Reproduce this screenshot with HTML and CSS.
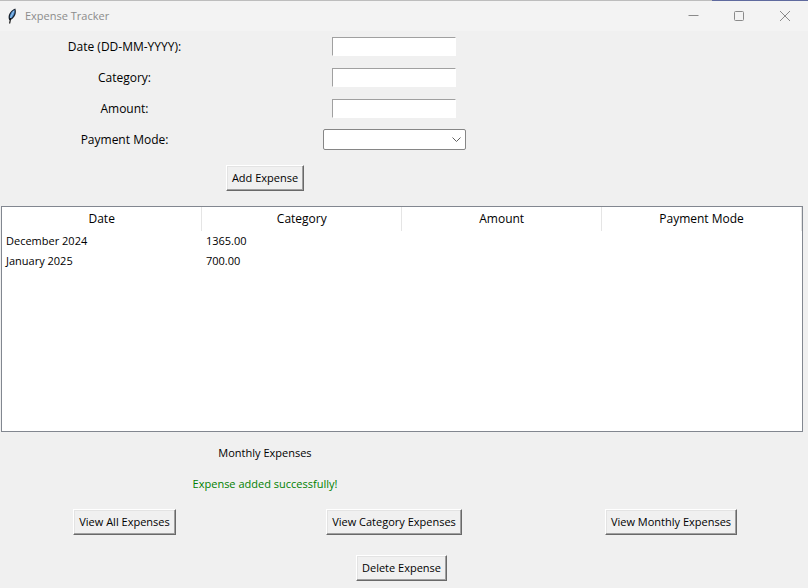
FILE: index.html
```html
<!DOCTYPE html>
<html lang="en">
<head>
<meta charset="utf-8">
<title>Expense Tracker</title>
<link rel="stylesheet" href="styles.css">
</head>
<body>
<div class="window">
  <header class="titlebar">
    <svg class="feather" width="10" height="16" viewBox="0 0 10 16" aria-hidden="true">
      <path d="M2.200 12.200C.4 8 2.600 3.200 8.300.6c1.600 4-.2 9-4.300 11.200z" fill="#17202c"/>
      <path d="M2.900 9.800C2.600 6.500 4.600 3.200 7.600 1.700c.5 2.700-.7 6.200-3.300 8.600z" fill="#4f91d4"/>
      <path d="M6.800 3L3.400 10" stroke="#b9d8f2" stroke-width=".7" fill="none"/>
      <path d="M3.600 10.500L2.600 15.500" stroke="#111" stroke-width="1.200" fill="none"/>
    </svg>
    <h1 class="title">Expense Tracker</h1>
    <div class="controls">
      <button class="control" type="button" aria-label="Minimize"><svg width="11" height="11" viewBox="0 0 11 11"><path d="M.5 4.500h10"/></svg></button>
      <button class="control" type="button" aria-label="Maximize"><svg width="11" height="11" viewBox="0 0 11 11"><rect x=".5" y=".5" width="9" height="9" rx="1"/></svg></button>
      <button class="control" type="button" aria-label="Close"><svg width="11" height="11" viewBox="0 0 11 11"><path d="M0 0l10 10M10 0L0 10"/></svg></button>
    </div>
  </header>
  <main class="content">
    <form class="form">
      <div class="row"><label for="date">Date (DD-MM-YYYY):</label><input class="entry" id="date" type="text"></div>
      <div class="row"><label for="category">Category:</label><input class="entry" id="category" type="text"></div>
      <div class="row"><label for="amount">Amount:</label><input class="entry" id="amount" type="text"></div>
      <div class="row"><label for="mode">Payment Mode:</label>
        <div class="combo">
          <select id="mode"><option></option></select>
          <svg class="chevron" width="9" height="5" viewBox="0 0 9 5" aria-hidden="true"><path d="M.5.5l4 4 4-4"/></svg>
        </div>
      </div>
      <div class="pair actions"><button class="button" type="button">Add Expense</button></div>
    </form>
    <div class="tree">
      <table>
        <thead><tr><th>Date</th><th>Category</th><th>Amount</th><th>Payment Mode</th></tr></thead>
        <tbody>
          <tr><td>December 2024</td><td>1365.00</td><td></td><td></td></tr>
          <tr><td>January 2025</td><td>700.00</td><td></td><td></td></tr>
        </tbody>
      </table>
    </div>
    <p class="pair message">Monthly Expenses</p>
    <p class="pair message success">Expense added successfully!</p>
    <div class="row actions">
      <button class="button" type="button">View All Expenses</button>
      <button class="button" type="button">View Category Expenses</button>
      <button class="button" type="button">View Monthly Expenses</button>
    </div>
    <div class="footer"><button class="button" type="button">Delete Expense</button></div>
  </main>
</div>
</body>
</html>
```
FILE: styles.css
```css
* { box-sizing: border-box; }

body {
  margin: 0;
  background: #f0f0f0;
  color: #000;
  font: 11px/16px "Open Sans", "Noto Sans", sans-serif;
}

.window {
  min-height: 100vh;
  border-top: 1px solid #bdbdbd;
  border-image: linear-gradient(to right, #bdbdbd 88%, #5f6a9e 88%) 1;
}

.titlebar {
  display: flex;
  align-items: center;
  height: 30px;
  padding-left: 7px;
  background: #f3f3f3;
}

.title {
  flex: 1;
  margin: 0 0 0 8px;
  color: #8c8c8c;
  font-size: 11px;
  font-weight: 400;
}

.controls { display: flex; }

.control {
  display: flex;
  align-items: center;
  justify-content: center;
  width: 46px;
  height: 30px;
  padding: 0;
  border: 0;
  background: none;
}

.control svg, .chevron { fill: none; stroke: #8a8a8a; }

.content { padding-right: 5px; }

.row {
  display: grid;
  grid-template-columns: 249fr 290fr 264fr;
  align-items: center;
  justify-items: center;
  min-height: 31px;
}

label, th { font-size: 12px; }

.pair {
  display: grid;
  place-items: center;
  width: 66%;
}

.entry {
  width: 124px;
  height: 19px;
  padding: 1px;
  border: 1px solid #fff;
  border-top-color: #a0a0a0;
  border-left-color: #a0a0a0;
  border-radius: 0;
  background: #fff;
  font: inherit;
}

.combo { position: relative; width: 143px; height: 21px; }

.combo select {
  appearance: none;
  display: block;
  width: 100%;
  height: 100%;
  padding: 0 20px 0 4px;
  border: 1px solid #868686;
  border-radius: 2px;
  background: #fff;
  font: inherit;
}

.chevron {
  position: absolute;
  top: 8px;
  right: 5px;
  stroke: #606060;
  pointer-events: none;
}

.actions { min-height: 46px; }

.button {
  height: 26px;
  padding: 0 5px;
  border: 1px solid;
  border-color: #fff #696969 #696969 #fff;
  box-shadow: inset -1px -1px #a0a0a0, inset 1px 1px #e3e3e3;
  background: #f0f0f0;
  color: #000;
  font: inherit;
}

.tree {
  min-height: 226px;
  margin: 5px 0 5px 1px;
  border: 1px solid #828790;
  background: #fff;
}

table {
  width: 100%;
  border-collapse: collapse;
  table-layout: fixed;
}

th {
  height: 24px;
  padding: 0;
  border-right: 1px solid #e5e5e5;
  font-weight: 400;
}

td { height: 20px; padding: 0 4px; }

.message { margin: 0; min-height: 31px; }

.success { color: #008000; }

.footer {
  display: grid;
  place-items: center;
  padding: 10px 0 7px;
}
```
